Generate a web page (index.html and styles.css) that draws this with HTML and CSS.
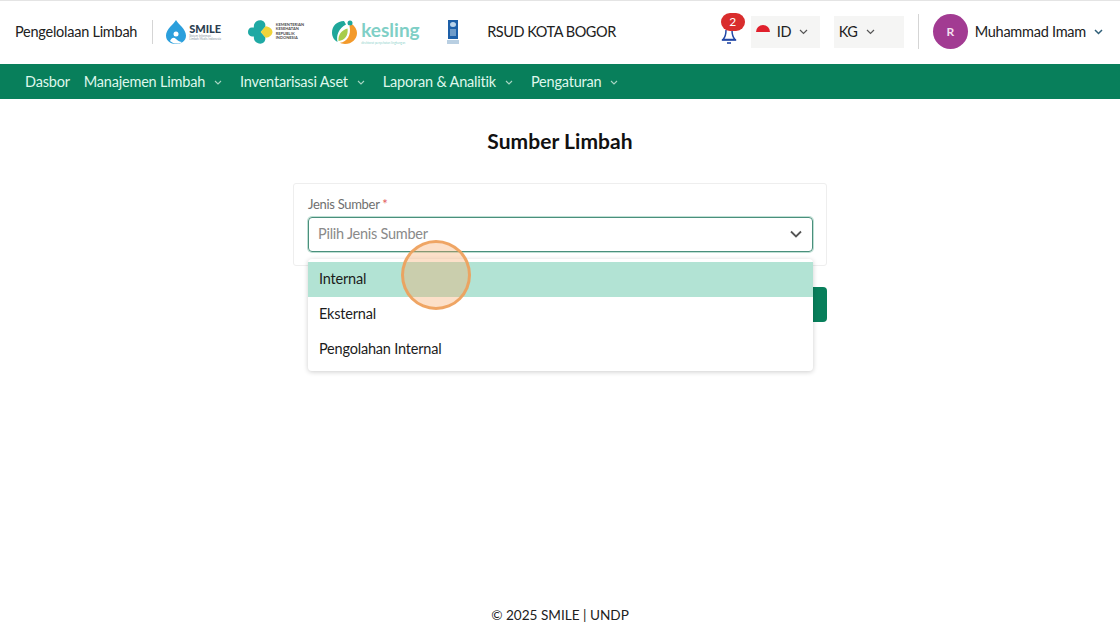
FILE: index.html
```html
<!DOCTYPE html>
<html lang="en">
<head>
  <meta charset="UTF-8">
  <meta name="viewport" content="width=device-width, initial-scale=1.0">
  <title>Sumber Limbah</title>
  <link rel="stylesheet" href="styles.css">
</head>
<body>
  <!-- Top bar -->
  <header class="topbar">
    <div class="brand">
      <span class="app-name">Pengelolaan Limbah</span>
      <span class="divider divider-brand"></span>

      <div class="logo logo-smile">
        <svg width="20" height="24" viewBox="0 0 20 24">
          <path d="M10 0C8 4 0 9 0 15.500C0 21 4.500 24 10 24C15.500 24 20 21 20 15.500C20 9 12 4 10 0Z" fill="#2b9fdc"/>
          <circle cx="10" cy="14" r="2.500" fill="#fff"/>
          <path d="M4 21C6 17 8 17 10 19C12 21 14 22 16 22C13 24.500 7 24 4 21Z" fill="#fff"/>
        </svg>
        <div class="smile-text">
          <span class="smile-name">SMILE</span>
          <span class="smile-sub">Sistem Informasi Limbah Medis Indonesia</span>
        </div>
      </div>

      <div class="logo logo-kemenkes">
        <svg width="25" height="24" viewBox="0 0 25 24">
          <path d="M8 7.500H4C1.500 7.500 0 9.500 0 12C0 14.500 1.500 16.500 4 16.500H8Z" fill="#1fa9a4"/>
          <path d="M6 12V6C6 2.500 9 0 12.500 0C16 0 18.500 3 17.500 7L13 12Z" fill="#1fa9a4"/>
          <path d="M6 12V18C6 21.500 9 24 12.500 24C16 24 18.500 21 17.500 17L13 12Z" fill="#1fa9a4"/>
          <path d="M13 12L18 6C22 6.500 25 9 25 12C25 15 22 17.500 18 18Z" fill="#f0d43a"/>
        </svg>
        <div class="kemenkes-text">KEMENTERIAN<br>KESEHATAN<br>REPUBLIK<br>INDONESIA</div>
      </div>

      <div class="logo logo-kesling">
        <svg width="25" height="24" viewBox="0 0 25 24">
          <path d="M12 1C5 1 0 6 0 12.500C0 17 2.500 20.500 5.500 22C4 15 7 8 14 4.500Z" fill="#1fa79a"/>
          <path d="M19 3.500C23 6 25 9.500 25 13C25 19 20 24 13 24C10.500 24 9 23.500 8 22.800C15 22 19.500 15 17.500 6Z" fill="#f39a2b"/>
          <path d="M6.500 21C6 15 9 10.500 15.500 8.500C16.500 15 13 20.500 6.500 21Z" fill="#a8cc4a"/>
          <circle cx="18" cy="3" r="2.500" fill="#1fa79a"/>
        </svg>
        <div class="kesling-text">
          <span class="kesling-name">kesling</span>
          <span class="kesling-sub">direktorat penyehatan lingkungan</span>
        </div>
      </div>

      <div class="logo logo-undp">
        <div class="undp-mark"><span class="undp-globe"></span><span class="undp-lines"></span></div>
        <span class="undp-foot"></span>
      </div>

      <span class="hospital">RSUD KOTA BOGOR</span>
    </div>

    <div class="top-actions">
      <div class="bell">
        <svg width="16" height="18" viewBox="0 0 16 18">
          <path d="M5 4C5 8 4.500 11 2 13.500H14C11.500 11 11 8 11 4" fill="none" stroke="#2348a6" stroke-width="1.500"/>
          <path d="M1 14H15" stroke="#2348a6" stroke-width="1.600"/>
          <path d="M6 17H10" stroke="#2348a6" stroke-width="1.600"/>
        </svg>
        <span class="badge">2</span>
      </div>

      <div class="pick pick-lang">
        <span class="flag"></span>
        <span>ID</span>
        <svg class="chev" width="9" height="6" viewBox="0 0 9 6"><path d="M1 1L4.500 4.500L8 1" fill="none" stroke="#555" stroke-width="1.200"/></svg>
      </div>
      <div class="pick pick-unit">
        <span>KG</span>
        <svg class="chev" width="9" height="6" viewBox="0 0 9 6"><path d="M1 1L4.500 4.500L8 1" fill="none" stroke="#555" stroke-width="1.200"/></svg>
      </div>

      <span class="divider divider-user"></span>

      <div class="user">
        <span class="avatar">R</span>
        <span class="user-name">Muhammad Imam</span>
        <svg class="chev-user" width="9" height="6" viewBox="0 0 9 6"><path d="M1 1L4.500 4.500L8 1" fill="none" stroke="#2f5f78" stroke-width="1.500"/></svg>
      </div>
    </div>
  </header>

  <!-- Menu -->
  <nav class="menu">
    <a class="menu-item">Dasbor</a>
    <a class="menu-item">Manajemen Limbah<svg class="menu-chev" width="8" height="5" viewBox="0 0 8 5"><path d="M1 1L4 4L7 1" fill="none" stroke="#a9d6c4" stroke-width="1.100"/></svg></a>
    <a class="menu-item">Inventarisasi Aset<svg class="menu-chev" width="8" height="5" viewBox="0 0 8 5"><path d="M1 1L4 4L7 1" fill="none" stroke="#a9d6c4" stroke-width="1.100"/></svg></a>
    <a class="menu-item">Laporan &amp; Analitik<svg class="menu-chev" width="8" height="5" viewBox="0 0 8 5"><path d="M1 1L4 4L7 1" fill="none" stroke="#a9d6c4" stroke-width="1.100"/></svg></a>
    <a class="menu-item">Pengaturan<svg class="menu-chev" width="8" height="5" viewBox="0 0 8 5"><path d="M1 1L4 4L7 1" fill="none" stroke="#a9d6c4" stroke-width="1.100"/></svg></a>
  </nav>

  <main class="content">
    <h1 class="page-title">Sumber Limbah</h1>

    <div class="form-wrap">
      <div class="card">
        <label class="field-label">Jenis Sumber <span class="required">*</span></label>
        <div class="select-wrap">
          <div class="select">
            <span class="placeholder">Pilih Jenis Sumber</span>
            <svg width="12" height="8" viewBox="0 0 12 8"><path d="M1 1.500L6 6.500L11 1.500" fill="none" stroke="#555" stroke-width="1.800"/></svg>
          </div>
          <ul class="dropdown">
            <li class="option option-active">Internal</li>
            <li class="option">Eksternal</li>
            <li class="option">Pengolahan Internal</li>
          </ul>
          <span class="click-marker"></span>
        </div>
      </div>
      <div class="form-actions">
        <button class="btn"></button>
      </div>
    </div>
  </main>

  <footer class="footer">© 2025 SMILE | UNDP</footer>
</body>
</html>
```

FILE: styles.css
```css
body {
  font-family: Lato, "Open Sans", sans-serif;
  margin: 0;
  padding: 0;
  height: 626px;
  display: flex;
  flex-direction: column;
  background-color: white;
  color: #212121;
  overflow: hidden;
}

/* Top bar */
.topbar {
  height: 64px;
  box-sizing: border-box;
  flex-shrink: 0;
  display: flex;
  justify-content: space-between;
  align-items: center;
  border-top: 1px solid #e4e4e4;
  padding: 0 15px 2px;
  font-size: 14.500px;
  letter-spacing: -0.25px;
}

.brand,
.top-actions {
  display: flex;
  align-items: center;
}

.hospital {
  margin-left: -1px;
  letter-spacing: -0.45px;
}

.divider {
  width: 1px;
  background-color: #d5d5d5;
}

.divider-brand {
  height: 24px;
  margin: 0 13px 0 15px;
}

.divider-user {
  height: 35px;
  margin: 0 14px;
}

.logo {
  display: flex;
  align-items: center;
  letter-spacing: 0;
}

.logo-smile {
  width: 55px;
  gap: 3px;
  margin-right: 27px;
}

.smile-text {
  display: flex;
  flex-direction: column;
  white-space: nowrap;
}

.smile-name {
  font-size: 11px;
  font-weight: 900;
  line-height: 13px;
  color: #2c3e50;
}

.smile-sub {
  width: 32px;
  white-space: normal;
  font-size: 3px;
  line-height: 3px;
  color: #8a97a3;
}

.logo-kemenkes {
  width: 56px;
  gap: 3px;
  margin-right: 28px;
}

.kemenkes-text {
  font-size: 4px;
  line-height: 4.500px;
  font-weight: 700;
  color: #4a4a4a;
}

.logo-kesling {
  width: 88px;
  gap: 4px;
  margin-right: 27px;
}

.kesling-text {
  display: flex;
  flex-direction: column;
  white-space: nowrap;
}

.kesling-name {
  font-size: 19px;
  font-weight: 700;
  line-height: 22px;
  color: #7fcfc6;
}

.kesling-sub {
  font-size: 3px;
  line-height: 4px;
  color: #8fd3cc;
}

.logo-undp {
  width: 12px;
  flex-direction: column;
  margin-right: 29px;
}

.undp-mark {
  width: 10px;
  height: 19px;
  display: flex;
  flex-direction: column;
  align-items: center;
  gap: 2px;
  padding-top: 2px;
  box-sizing: border-box;
  background-color: #1d5fa8;
}

.undp-globe {
  width: 6px;
  height: 5px;
  border-radius: 50%;
  background-color: #b9d3ea;
}

.undp-lines {
  width: 6px;
  height: 7px;
  background-color: #6e9bc9;
}

.undp-foot {
  width: 12px;
  height: 4px;
  margin-top: 1px;
  background-color: #b9cfe2;
}

.bell {
  position: relative;
  width: 16px;
  height: 18px;
  margin: 6px 14px 0 0;
}

.badge {
  position: absolute;
  top: -13px;
  left: 0;
  width: 24px;
  height: 18px;
  border-radius: 9px;
  background-color: #d92d2d;
  color: white;
  font-size: 12px;
  line-height: 17px;
  text-align: center;
}

.pick {
  height: 32px;
  display: flex;
  align-items: center;
  background-color: #f5f5f4;
}

.pick-lang {
  width: 69px;
  padding-left: 5px;
  box-sizing: border-box;
  margin-right: 14px;
}

.pick-unit {
  width: 70px;
  padding-left: 5px;
  box-sizing: border-box;
}

.flag {
  width: 14px;
  height: 14px;
  border-radius: 50%;
  margin-right: 7px;
  background: linear-gradient(#e0202c 50%, #f6f6f6 50%);
}

.chev {
  margin-left: 8px;
}

.user {
  display: flex;
  align-items: center;
}

.avatar {
  width: 35px;
  height: 35px;
  border-radius: 50%;
  margin-right: 7px;
  background-color: #a23b92;
  color: #f3dff0;
  font-size: 12px;
  font-weight: 700;
  line-height: 35px;
  text-align: center;
}

.chev-user {
  margin: 0 2px 0 8px;
}

/* Menu */
.menu {
  height: 35px;
  flex-shrink: 0;
  display: flex;
  align-items: center;
  padding-left: 25px;
  background-color: #087f5b;
  font-size: 14.500px;
  letter-spacing: -0.2px;
}

.menu-item {
  display: flex;
  align-items: center;
  margin-right: 14px;
  color: #dff7ec;
}

.menu-chev {
  margin: 1px 4px 0 9px;
}

/* Page */
.content {
  flex: 1;
  display: flex;
  flex-direction: column;
  align-items: center;
}

.page-title {
  margin: 29px 0 29px;
  font-size: 21px;
  letter-spacing: 0.05px;
  line-height: 26px;
  font-weight: 700;
  color: #111;
}

.form-wrap {
  width: 534px;
}

.card {
  height: 83px;
  box-sizing: border-box;
  padding: 12px 13px 0 14px;
  border: 1px solid #eeeeee;
  border-radius: 3px;
}

.field-label {
  display: block;
  height: 21px;
  font-size: 13px;
  letter-spacing: -0.3px;
  line-height: 16px;
  color: #6f6f6f;
}

.required {
  color: #e35d5d;
}

.select-wrap {
  position: relative;
}

.select {
  height: 35px;
  box-sizing: border-box;
  display: flex;
  justify-content: space-between;
  align-items: center;
  padding: 0 10px 1px 9px;
  border: 1px solid #4a8f7c;
  border-radius: 4px;
  box-shadow: 0 0 0 1px #bfe0d4;
  font-size: 14.500px;
  letter-spacing: -0.25px;
}

.placeholder {
  margin-bottom: 2px;
  color: #8a8a8a;
}

.dropdown {
  position: absolute;
  top: 42px;
  left: 0;
  right: 0;
  margin: 0;
  padding: 3px 0 4px;
  list-style: none;
  background-color: white;
  border-radius: 4px;
  box-shadow: 0 1px 5px rgba(0, 0, 0, 0.2);
  z-index: 2;
}

.option {
  height: 35px;
  padding-left: 11px;
  font-size: 14.500px;
  letter-spacing: -0.2px;
  line-height: 33px;
  color: #1c1c1c;
}

.option-active {
  background-color: #b2e3d4;
}

.click-marker {
  position: absolute;
  top: 23px;
  left: 93px;
  width: 70px;
  height: 70px;
  box-sizing: border-box;
  border: 3px solid rgba(238, 160, 90, 0.9);
  border-radius: 50%;
  background-color: rgba(245, 165, 100, 0.35);
  z-index: 3;
}

.form-actions {
  display: flex;
  justify-content: flex-end;
  margin-top: 21px;
}

.btn {
  width: 80px;
  height: 35px;
  padding: 0;
  border: none;
  border-radius: 4px;
  background-color: #087f5b;
}

.footer {
  height: 22px;
  font-size: 13.600px;
  line-height: 22px;
  text-align: center;
}
```
